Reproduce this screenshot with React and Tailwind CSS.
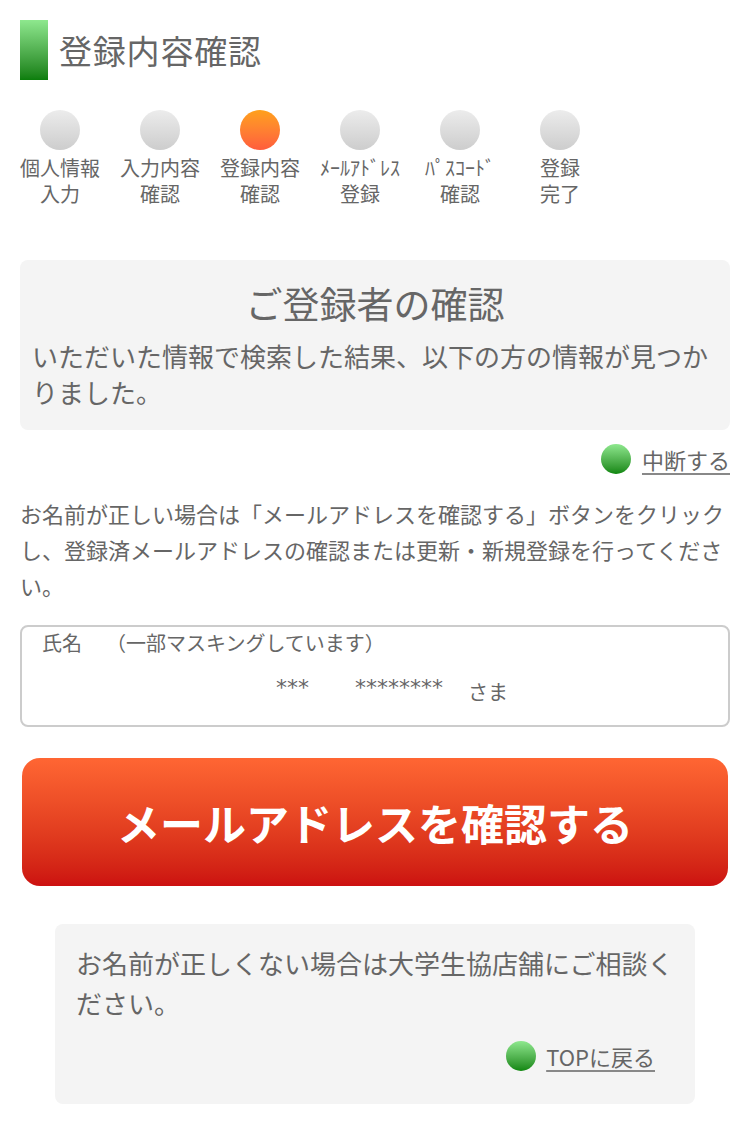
import React from "react";

const font = { fontFamily: '"Noto Sans CJK JP", "Noto Sans", sans-serif' };

const steps = [
  ["個人情報", "入力", false],
  ["入力内容", "確認", false],
  ["登録内容", "確認", true],
  ["ﾒｰﾙｱﾄﾞﾚｽ", "登録", false],
  ["ﾊﾟｽｺｰﾄﾞ", "確認", false],
  ["登録", "完了", false],
];

function Dot() {
  return (
    <span className="inline-block w-[30px] h-[30px] rounded-full bg-gradient-to-b from-[#8ee88e] to-[#0c870c] shrink-0" />
  );
}

export default function App() {
  return (
    <div
      className="w-[746px] min-h-[1142px] bg-white text-[#666] pt-[20px] pl-[20px] pr-[16px] pb-[38px]"
      style={font}
    >
      {/* Header */}
      <div className="flex items-center h-[60px]">
        <div className="w-[28px] h-[60px] bg-gradient-to-b from-[#8ee88e] to-[#0a7e0a]" />
        <h1 className="ml-[11px] text-[33px] leading-[60px] text-[#666] tracking-[0.8px]">登録内容確認</h1>
      </div>

      {/* Steps */}
      <div className="flex -ml-[10px] mt-[30px]">
        {steps.map(([a, b, active], i) => (
          <div key={i} className="w-[100px] flex flex-col items-center">
            <div
              className={
                active
                  ? "w-[40px] h-[40px] rounded-full bg-gradient-to-b from-[#ffa01a] to-[#ff5c3c]"
                  : "w-[40px] h-[40px] rounded-full bg-gradient-to-b from-[#ececec] to-[#cdcdcd]"
              }
            />
            <div className="mt-[5px] text-[20px] leading-[26px] text-center text-[#666] whitespace-nowrap">
              <div>{a}</div>
              <div>{b}</div>
            </div>
          </div>
        ))}
      </div>

      {/* Box 1 */}
      <div className="mt-[53px] bg-[#f4f4f4] rounded-[8px] pt-[21px] pb-[20px] px-[12px]">
        <h2 className="text-[37px] leading-[44px] text-center text-[#666]">ご登録者の確認</h2>
        <p className="mt-[13px] text-[26px] leading-[36px] text-[#666]">
          いただいた情報で検索した結果、以下の方の情報が見つかりました。
        </p>
      </div>

      {/* 中断する */}
      <div className="mt-[14px] flex justify-end items-center gap-[11px] h-[30px]">
        <Dot />
        <a className="text-[22px] leading-[30px] underline underline-offset-[4px] decoration-[#888] text-[#666]">中断する</a>
      </div>

      <p className="mt-[21px] text-[22px] leading-[36px] text-[#666]">
        お名前が正しい場合は「メールアドレスを確認する」ボタンをクリックし、登録済メールアドレスの確認または更新・新規登録を行ってください。
      </p>

      {/* Name box */}
      <div className="mt-[22px] h-[102px] border-2 border-[#cccccc] rounded-[8px] pt-[2px] pl-[20px]">
        <div className="text-[20px] leading-[28px] text-[#666]">
          <span>氏名</span>
          <span className="ml-[24px]">（一部マスキングしています）</span>
        </div>
        <div className="flex justify-center items-end pl-[14px] mt-[20px]">
          <span className="text-[22px] leading-[22px] mb-[6px] text-[#666]" style={{ fontFamily: '"DejaVu Sans", sans-serif' }}>***</span>
          <span className="ml-[46px] text-[22px] leading-[22px] mb-[6px] text-[#666]" style={{ fontFamily: '"DejaVu Sans", sans-serif' }}>********</span>
          <span className="ml-[25px] text-[20px] leading-[26px]">さま</span>
        </div>
      </div>

      {/* Button */}
      <div className="mt-[31px] mx-[2px]">
        <button className="w-full h-[128px] rounded-[18px] bg-gradient-to-b from-[#ff6633] to-[#cc1010] text-white text-[43px] font-bold flex items-center justify-center">
          メールアドレスを確認する
        </button>
      </div>

      {/* Bottom box */}
      <div className="mt-[38px] mx-[35px] bg-[#f4f4f4] rounded-[8px] pt-[19px] pb-[33px] pl-[21px] pr-[20px]">
        <p className="text-[26px] leading-[40px] text-[#666]">
          お名前が正しくない場合は大学生協店舗にご相談ください。
        </p>
        <div className="mt-[18px] flex justify-end items-center gap-[10px] h-[30px] pr-[20px]">
          <Dot />
          <a className="text-[22px] leading-[30px] underline underline-offset-[4px] decoration-[#888] text-[#666]">TOPに戻る</a>
        </div>
      </div>
    </div>
  );
}
